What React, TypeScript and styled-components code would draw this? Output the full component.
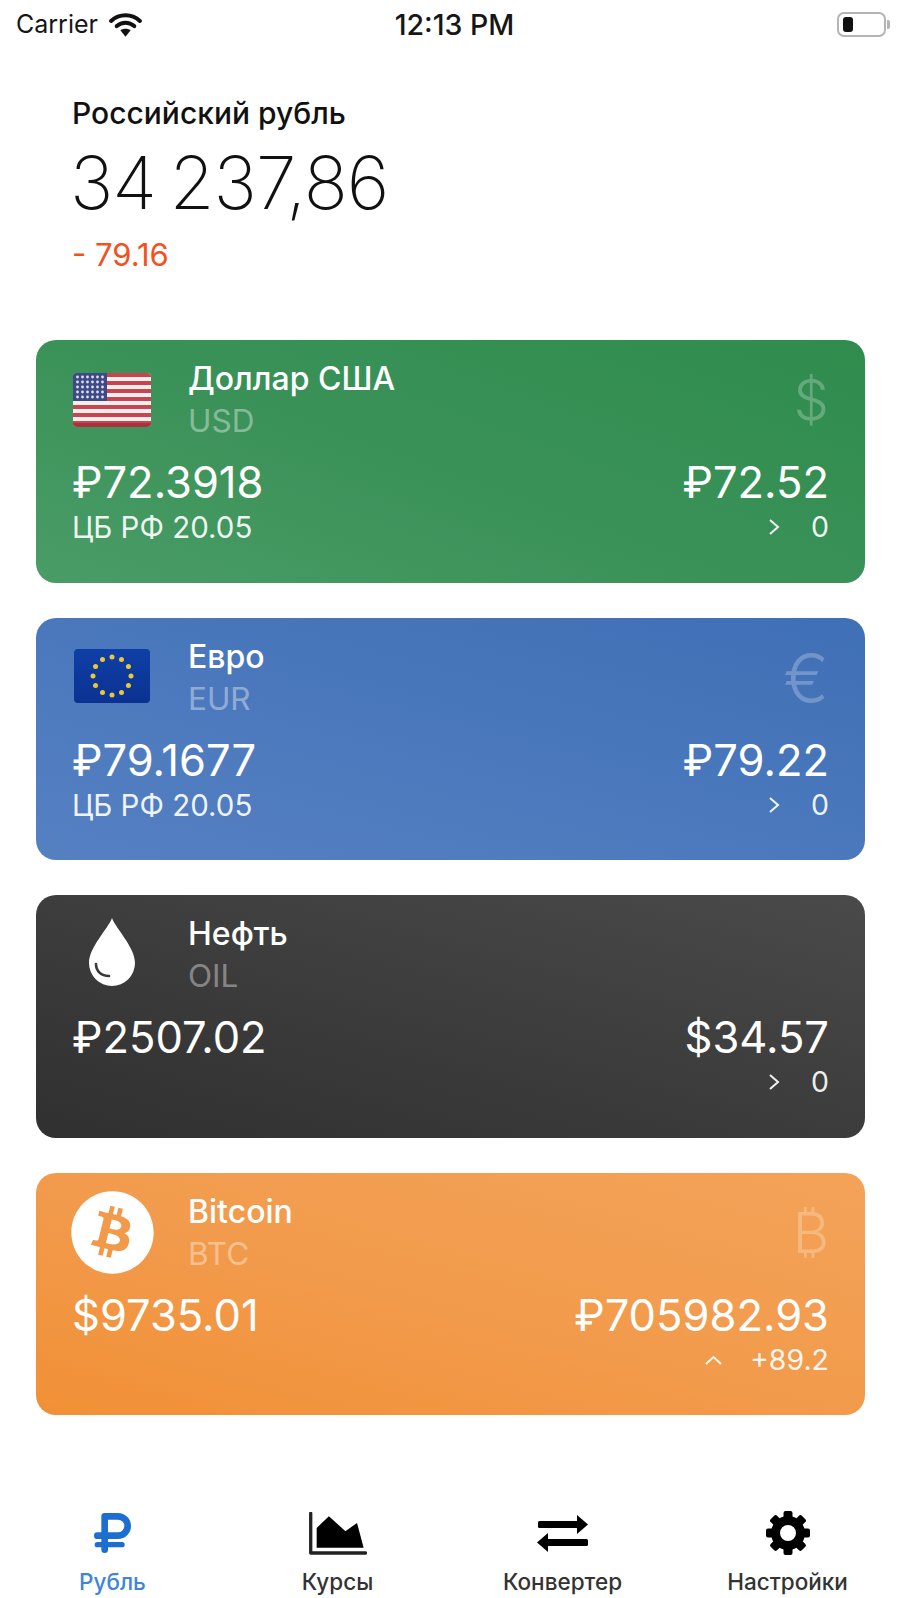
import React from 'react';
import styled, { createGlobalStyle } from 'styled-components';
import { FaBitcoin } from 'react-icons/fa';

const GlobalStyle = createGlobalStyle`
  html, body {
    margin: 0;
    padding: 0;
    background: #ffffff;
    font-family: Inter, "Liberation Sans", sans-serif;
  }
`;

const Screen = styled.div`
  width: 900px;
  height: 1598px;
  display: flex;
  flex-direction: column;
  overflow: hidden;
  background: #ffffff;
`;

const StatusBar = styled.div`
  height: 48px;
  padding: 0 10px 0 16px;
  display: grid;
  grid-template-columns: 1fr auto 1fr;
  align-items: center;
  font-size: 25px;
  color: #161616;
`;

const Carrier = styled.div`
  display: flex;
  align-items: center;
  gap: 10px;
  font-weight: 400;
`;

const Clock = styled.div`
  font-size: 28.5px;
  font-weight: 500;
  margin-left: 3px;
`;

const BatteryWrap = styled.div`
  justify-self: end;
  display: flex;
  align-items: center;
  gap: 1px;
`;

const BatteryBody = styled.div`
  width: 49px;
  height: 25px;
  box-sizing: border-box;
  border: 2px solid #b4b4b4;
  border-radius: 7px;
  padding: 3px 4px;
`;

const BatteryLevel = styled.div`
  width: 10px;
  height: 100%;
  border-radius: 3px;
  background: #111111;
`;

const BatteryCap = styled.div`
  width: 3px;
  height: 9px;
  border-radius: 0 2px 2px 0;
  background: #b4b4b4;
`;

const Balance = styled.div`
  padding: 49px 72px 0;
  height: 292px;
  box-sizing: border-box;
`;

const BalanceTitle = styled.div`
  font-size: 30px;
  line-height: 32px;
  font-weight: 500;
  color: #111111;
`;

const BalanceValue = styled.div`
  margin: 11px 0 0 -2px;
  font-size: 73px;
  line-height: 86px;
  font-weight: 200;
  letter-spacing: -1px;
  word-spacing: -6px;
  color: #111111;
`;

const BalanceDelta = styled.div`
  margin-top: 12px;
  font-size: 31px;
  line-height: 34px;
  color: #f4511e;
`;

const Cards = styled.div`
  padding: 0 35px 0 36px;
  display: flex;
  flex-direction: column;
  gap: 35px;
`;

const Card = styled.div<{ $gradient: string }>`
  height: 242.5px;
  box-sizing: border-box;
  padding: 12px 36px 0;
  border-radius: 20px;
  background: ${props => props.$gradient};
  color: #ffffff;
`;

const CardTop = styled.div`
  height: 96px;
  display: flex;
  align-items: center;
`;

const CardIcon = styled.div<{ $nudge?: number }>`
  width: 116px;
  flex: none;
  display: flex;
  align-items: center;
  margin-bottom: ${props => props.$nudge ?? 0}px;
`;

const CardTitles = styled.div`
  flex: 1;
  display: flex;
  flex-direction: column;
  gap: 6px;
`;

const CardName = styled.div`
  font-size: 32px;
  line-height: 36px;
  font-weight: 500;
`;

const CardCode = styled.div`
  font-size: 31.5px;
  line-height: 36px;
  color: rgba(255, 255, 255, 0.4);
`;

const Ghost = styled.div<{ $size: number }>`
  font-size: ${props => props.$size}px;
  line-height: 60px;
  font-weight: 350;
  color: rgba(255, 255, 255, 0.25);
`;

const Rates = styled.div`
  margin-top: 9px;
  display: flex;
  justify-content: space-between;
`;

const RateColumn = styled.div<{ $end?: boolean }>`
  display: flex;
  flex-direction: column;
  align-items: ${props => (props.$end ? 'flex-end' : 'flex-start')};
`;

const Amount = styled.div`
  font-size: 43.5px;
  line-height: 50px;
  margin-bottom: 2px;
`;

const Note = styled.div`
  font-size: 29.5px;
  line-height: 36px;
  color: rgba(255, 255, 255, 0.92);
`;

const Trend = styled.div`
  display: flex;
  align-items: center;
  gap: 28px;
  font-size: 28.5px;
  line-height: 36px;
  color: rgba(255, 255, 255, 0.92);
`;

const TabBar = styled.div`
  margin-top: auto;
  display: grid;
  grid-template-columns: repeat(4, 1fr);
  padding-bottom: 3px;
`;

const Tab = styled.div`
  display: flex;
  flex-direction: column;
  align-items: center;
  gap: 13px;
`;

const TabIcon = styled.div`
  height: 46px;
  display: flex;
  align-items: center;
  justify-content: center;
`;

const TabLabel = styled.div<{ $active?: boolean }>`
  font-size: 22.5px;
  line-height: 26px;
  font-weight: 500;
  color: ${props => (props.$active ? '#3f86d8' : '#333333')};
`;

const WifiIcon = () => (
  <svg width="35" height="27" viewBox="0 0 34 26" fill="none">
    <path d="M3 9.5C11 2.2 23 2.2 31 9.5" stroke="#111" strokeWidth="4" strokeLinecap="round" />
    <path d="M8.5 14.5C13.5 10.2 20.5 10.2 25.5 14.5" stroke="#111" strokeWidth="4" strokeLinecap="round" />
    <path d="M12 18.6C15 16.6 19 16.6 22 18.6L17 25Z" fill="#111" />
  </svg>
);

const UsFlag = () => (
  <svg width="78" height="54" viewBox="0 0 78 54" style={{ marginLeft: 1 }}>
    <defs>
      <clipPath id="us-round">
        <rect width="78" height="54" rx="4" />
      </clipPath>
    </defs>
    <g clipPath="url(#us-round)">
      <rect width="78" height="54" fill="#f4efef" />
      {Array.from({ length: 7 }).map((_, i) => (
        <rect key={i} y={i * 8} width="78" height="4" fill="#c8444f" />
      ))}
      <rect y="50" width="78" height="4" fill="#a5343e" />
      <rect width="34" height="28" fill="#3d4a86" />
      {Array.from({ length: 5 }).map((_, row) =>
        Array.from({ length: 6 }).map((_, col) => (
          <circle key={`${row}-${col}`} cx={4.5 + col * 5} cy={4 + row * 5} r="1.4" fill="#dfe0ea" />
        ))
      )}
    </g>
  </svg>
);

const EuFlag = () => (
  <svg width="76" height="54" viewBox="0 0 76 54" style={{ marginLeft: 2 }}>
    <defs>
      <linearGradient id="eu-blue" x1="0" y1="0" x2="0" y2="1">
        <stop offset="0" stopColor="#0f3fa6" />
        <stop offset="1" stopColor="#0b3291" />
      </linearGradient>
    </defs>
    <rect width="76" height="54" rx="4" fill="url(#eu-blue)" />
    {Array.from({ length: 12 }).map((_, i) => {
      const angle = (i * Math.PI) / 6;
      return <circle key={i} cx={38 + 19 * Math.sin(angle)} cy={27 - 19 * Math.cos(angle)} r="2.5" fill="#e8c93a" />;
    })}
  </svg>
);

const OilDrop = () => (
  <svg width="46" height="68" viewBox="0 0 46 68" style={{ marginLeft: 17 }}>
    <path d="M23 0C27 11 46 29 46 45A23 23 0 0 1 0 45C0 29 19 11 23 0Z" fill="#ffffff" />
    <path d="M7 46C7 53 12 58 20 58" fill="none" stroke="#3a3a3a" strokeWidth="2.6" strokeLinecap="round" />
  </svg>
);

const RubleIcon = () => (
  <svg width="37" height="40" viewBox="284 92 111 120" fill="none" stroke="#1c6fd0" strokeWidth="20" strokeLinecap="round" strokeLinejoin="round">
    <path d="M316 202V102H356A29 29 0 0 1 356 160H294" />
    <path d="M294 187H368" strokeWidth="16" />
  </svg>
);

const ChartIcon = () => (
  <svg width="58" height="43" viewBox="925 92 175 130">
    <path d="M948 200V140L985 105L1035 150L1070 125L1090 200Z" fill="#000" />
    <path d="M930 96V216H1096" fill="none" stroke="#222" strokeWidth="10" strokeLinecap="round" strokeLinejoin="round" />
  </svg>
);

const ConverterIcon = () => (
  <svg width="51" height="38" viewBox="0 0 51 38">
    <rect x="1" y="7" width="43" height="7" rx="1.5" fill="#000" />
    <path d="M40 1L51 10.5L40 20Z" fill="#000" />
    <rect x="7" y="25" width="44" height="7" rx="1.5" fill="#000" />
    <path d="M11 19L0 28.5L11 38Z" fill="#000" />
  </svg>
);

const GearIcon = () => (
  <svg width="44" height="44" viewBox="0 0 44 44">
    <circle cx="22" cy="22" r="12.5" fill="none" stroke="#000" strokeWidth="9" />
    {Array.from({ length: 8 }).map((_, i) => (
      <rect key={i} x="17.5" y="0" width="9" height="9" rx="2" fill="#000" transform={`rotate(${i * 45} 22 22)`} />
    ))}
  </svg>
);

const Chevron = ({ up }: { up?: boolean }) => (
  <svg width="17" height="16" viewBox="0 0 17 16" fill="none">
    <path
      d={up ? 'M1 12L8.5 5L16 12' : 'M4 1L12 8L4 15'}
      stroke="rgba(255,255,255,0.92)"
      strokeWidth="2"
    />
  </svg>
);

interface CardData {
  name: string;
  code: string;
  gradient: string;
  icon: React.ReactNode;
  nudge?: number;
  ghost?: string;
  ghostSize?: number;
  amount: string;
  note?: string;
  rate: string;
  up?: boolean;
  change: string;
}

const cards: CardData[] = [
  {
    name: 'Доллар США',
    code: 'USD',
    gradient: 'linear-gradient(200deg, #2f8c4d 0%, #3b9259 55%, #4a9c66 100%)',
    icon: <UsFlag />,
    ghost: '$',
    ghostSize: 56,
    amount: '₽72.3918',
    note: 'ЦБ РФ 20.05',
    rate: '₽72.52',
    change: '0',
  },
  {
    name: 'Евро',
    code: 'EUR',
    gradient: 'linear-gradient(195deg, #3f6fb5 0%, #4c79bd 55%, #5581c3 100%)',
    icon: <EuFlag />,
    nudge: 4,
    ghost: '€',
    ghostSize: 68,
    amount: '₽79.1677',
    note: 'ЦБ РФ 20.05',
    rate: '₽79.22',
    change: '0',
  },
  {
    name: 'Нефть',
    code: 'OIL',
    gradient: 'linear-gradient(195deg, #4a4a4a 0%, #3a3a3a 60%, #303030 100%)',
    icon: <OilDrop />,
    nudge: 6,
    amount: '₽2507.02',
    rate: '$34.57',
    change: '0',
  },
  {
    name: 'Bitcoin',
    code: 'BTC',
    gradient: 'linear-gradient(195deg, #f3a359 0%, #f29a4b 55%, #f19036 100%)',
    icon: <FaBitcoin size={85} color="#ffffff" style={{ marginLeft: -2 }} />,
    ghost: '₿',
    ghostSize: 56,
    amount: '$9735.01',
    rate: '₽705982.93',
    up: true,
    change: '+89.2',
  },
];

const tabs = [
  { label: 'Рубль', icon: <RubleIcon />, active: true },
  { label: 'Курсы', icon: <ChartIcon /> },
  { label: 'Конвертер', icon: <ConverterIcon /> },
  { label: 'Настройки', icon: <GearIcon /> },
];

export default function App() {
  return (
    <Screen>
      <GlobalStyle />
      <StatusBar>
        <Carrier>
          Carrier
          <WifiIcon />
        </Carrier>
        <Clock>12:13 PM</Clock>
        <BatteryWrap>
          <BatteryBody>
            <BatteryLevel />
          </BatteryBody>
          <BatteryCap />
        </BatteryWrap>
      </StatusBar>

      <Balance>
        <BalanceTitle>Российский рубль</BalanceTitle>
        <BalanceValue>34 237,86</BalanceValue>
        <BalanceDelta>- 79.16</BalanceDelta>
      </Balance>

      <Cards>
        {cards.map(card => (
          <Card key={card.code} $gradient={card.gradient}>
            <CardTop>
              <CardIcon $nudge={card.nudge}>{card.icon}</CardIcon>
              <CardTitles>
                <CardName>{card.name}</CardName>
                <CardCode>{card.code}</CardCode>
              </CardTitles>
              {card.ghost && <Ghost $size={card.ghostSize ?? 56}>{card.ghost}</Ghost>}
            </CardTop>
            <Rates>
              <RateColumn>
                <Amount>{card.amount}</Amount>
                {card.note && <Note>{card.note}</Note>}
              </RateColumn>
              <RateColumn $end>
                <Amount>{card.rate}</Amount>
                <Trend>
                  <Chevron up={card.up} />
                  {card.change}
                </Trend>
              </RateColumn>
            </Rates>
          </Card>
        ))}
      </Cards>

      <TabBar>
        {tabs.map(tab => (
          <Tab key={tab.label}>
            <TabIcon>{tab.icon}</TabIcon>
            <TabLabel $active={tab.active}>{tab.label}</TabLabel>
          </Tab>
        ))}
      </TabBar>
    </Screen>
  );
}
